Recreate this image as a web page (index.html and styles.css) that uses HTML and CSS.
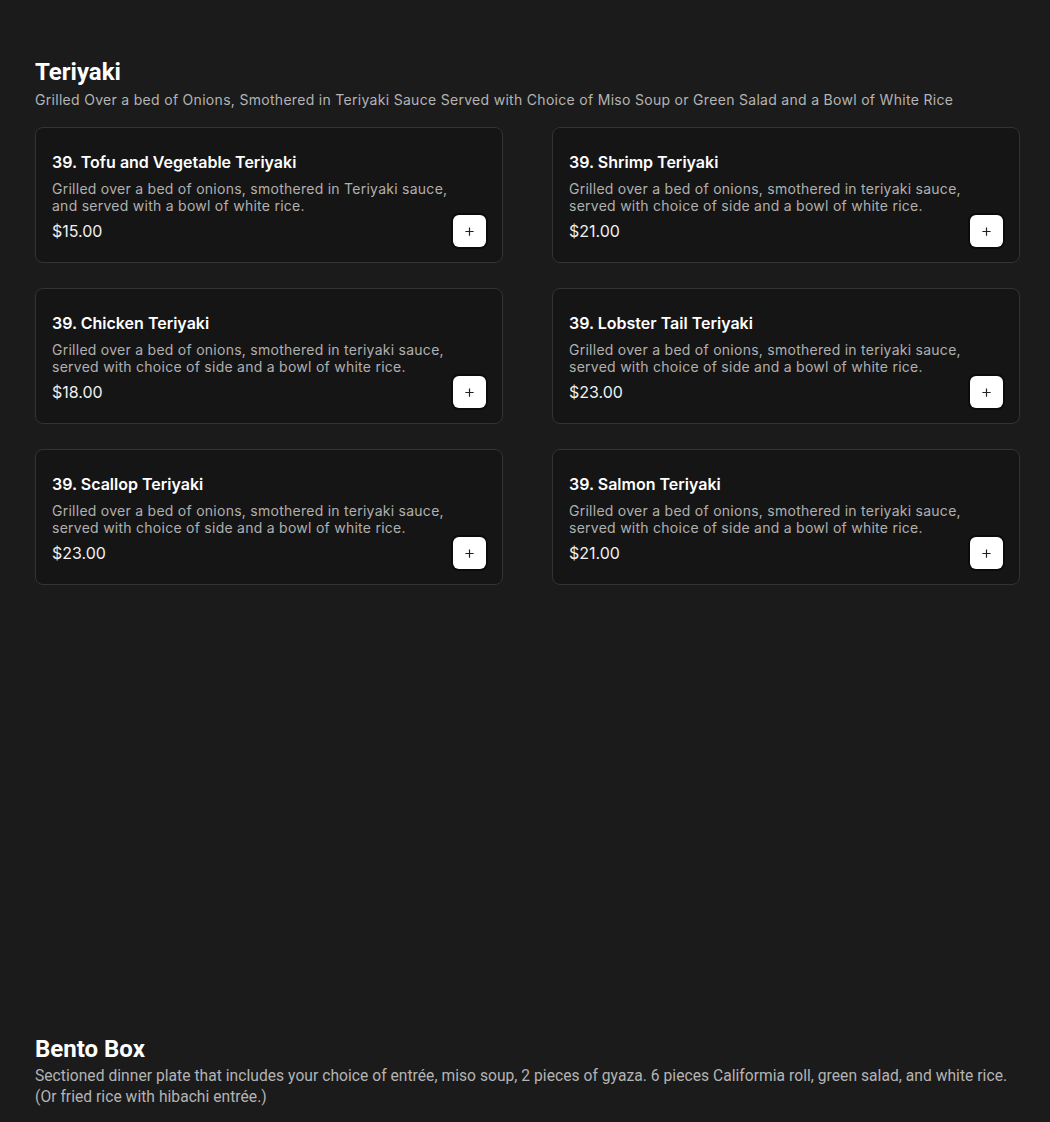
FILE: index.html
```html
<!DOCTYPE html>
<html lang="en">
<head>
<meta charset="utf-8">
<title>Menu</title>
<link rel="stylesheet" href="styles.css">
</head>
<body>
<main class="menu">
  <section class="category category-teriyaki">
    <h2 class="category-title">Teriyaki</h2>
    <p class="category-desc">Grilled Over a bed of Onions, Smothered in Teriyaki Sauce Served with Choice of Miso Soup or Green Salad and a Bowl of White Rice</p>
    <div class="grid">
      <article class="card">
        <h3 class="item-title">39. Tofu and Vegetable Teriyaki</h3>
        <p class="item-desc">Grilled over a bed of onions, smothered in Teriyaki sauce, and served with a bowl of white rice.</p>
        <div class="item-row"><span class="price">$15.00</span><button class="add" aria-label="Add"><svg viewBox="0 0 12 12" width="11" height="11"><path d="M6 1.5v9M1.5 6h9" stroke="#222" stroke-width="1.3" fill="none"/></svg></button></div>
      </article>
      <article class="card">
        <h3 class="item-title">39. Shrimp Teriyaki</h3>
        <p class="item-desc">Grilled over a bed of onions, smothered in teriyaki sauce, served with choice of side and a bowl of white rice.</p>
        <div class="item-row"><span class="price">$21.00</span><button class="add" aria-label="Add"><svg viewBox="0 0 12 12" width="11" height="11"><path d="M6 1.5v9M1.5 6h9" stroke="#222" stroke-width="1.3" fill="none"/></svg></button></div>
      </article>
      <article class="card">
        <h3 class="item-title">39. Chicken Teriyaki</h3>
        <p class="item-desc">Grilled over a bed of onions, smothered in teriyaki sauce, served with choice of side and a bowl of white rice.</p>
        <div class="item-row"><span class="price">$18.00</span><button class="add" aria-label="Add"><svg viewBox="0 0 12 12" width="11" height="11"><path d="M6 1.5v9M1.5 6h9" stroke="#222" stroke-width="1.3" fill="none"/></svg></button></div>
      </article>
      <article class="card">
        <h3 class="item-title">39. Lobster Tail Teriyaki</h3>
        <p class="item-desc">Grilled over a bed of onions, smothered in teriyaki sauce, served with choice of side and a bowl of white rice.</p>
        <div class="item-row"><span class="price">$23.00</span><button class="add" aria-label="Add"><svg viewBox="0 0 12 12" width="11" height="11"><path d="M6 1.5v9M1.5 6h9" stroke="#222" stroke-width="1.3" fill="none"/></svg></button></div>
      </article>
      <article class="card">
        <h3 class="item-title">39. Scallop Teriyaki</h3>
        <p class="item-desc">Grilled over a bed of onions, smothered in teriyaki sauce, served with choice of side and a bowl of white rice.</p>
        <div class="item-row"><span class="price">$23.00</span><button class="add" aria-label="Add"><svg viewBox="0 0 12 12" width="11" height="11"><path d="M6 1.5v9M1.5 6h9" stroke="#222" stroke-width="1.3" fill="none"/></svg></button></div>
      </article>
      <article class="card">
        <h3 class="item-title">39. Salmon Teriyaki</h3>
        <p class="item-desc">Grilled over a bed of onions, smothered in teriyaki sauce, served with choice of side and a bowl of white rice.</p>
        <div class="item-row"><span class="price">$21.00</span><button class="add" aria-label="Add"><svg viewBox="0 0 12 12" width="11" height="11"><path d="M6 1.5v9M1.5 6h9" stroke="#222" stroke-width="1.3" fill="none"/></svg></button></div>
      </article>
    </div>
  </section>
  <section class="category category-bento">
    <h2 class="category-title">Bento Box</h2>
    <p class="category-desc bento-desc">Sectioned dinner plate that includes your choice of entrée, miso soup, 2 pieces of gyaza. 6 pieces Califormia roll, green salad, and white rice. (Or fried rice with hibachi entrée.)</p>
  </section>
</main>
</body>
</html>
```
FILE: styles.css
```css
html, body {
  margin: 0;
  padding: 0;
  background: #1b1b1b;
}
body {
  font-family: "Inter", "Liberation Sans", sans-serif;
  color: #ffffff;
}
.menu {
  padding: 57px 30px 0 35px;
}
.category-teriyaki {
  padding-bottom: 449px;
}
.category-title {
  margin: 0;
  font-family: "Roboto", "Liberation Sans", sans-serif;
  font-weight: 700;
  font-size: 24px;
  line-height: 30px;
  color: #ffffff;
}
.category-desc {
  margin: 3px 0 17px;
  font-size: 14px;
  line-height: 20px;
  letter-spacing: 0.3px;
  color: #b4b4b4;
}
.bento-desc {
  font-family: "Roboto", "Liberation Sans", sans-serif;
  font-size: 15.6px;
  line-height: 21px;
  letter-spacing: 0.04px;
  margin-top: 2px;
}
.grid {
  display: grid;
  grid-template-columns: 468px 468px;
  column-gap: 49px;
  row-gap: 25px;
}
.card {
  background: #151515;
  border: 1px solid #333333;
  border-radius: 8px;
  padding: 24px 16px 15px 16px;
  display: flex;
  flex-direction: column;
}
.item-title {
  margin: 0;
  font-size: 16px;
  line-height: 20px;
  font-weight: 600;
  color: #ffffff;
}
.item-desc {
  margin: 8px 0 0;
  font-size: 14px;
  line-height: 17px;
  letter-spacing: 0.26px;
  color: #b0b0b0;
  padding-right: 30px;
}
.item-row {
  display: flex;
  justify-content: space-between;
  align-items: center;
  margin-top: 1px;
}
.price {
  font-size: 16px;
  line-height: 20px;
  color: #f0f0f0;
}
.add {
  width: 33px;
  height: 32px;
  border: none;
  border-radius: 6px;
  background: #ffffff;
  box-shadow: 0 0 0 2px rgba(0, 0, 0, 0.45);
  display: flex;
  align-items: center;
  justify-content: center;
  padding: 0;
}
```
